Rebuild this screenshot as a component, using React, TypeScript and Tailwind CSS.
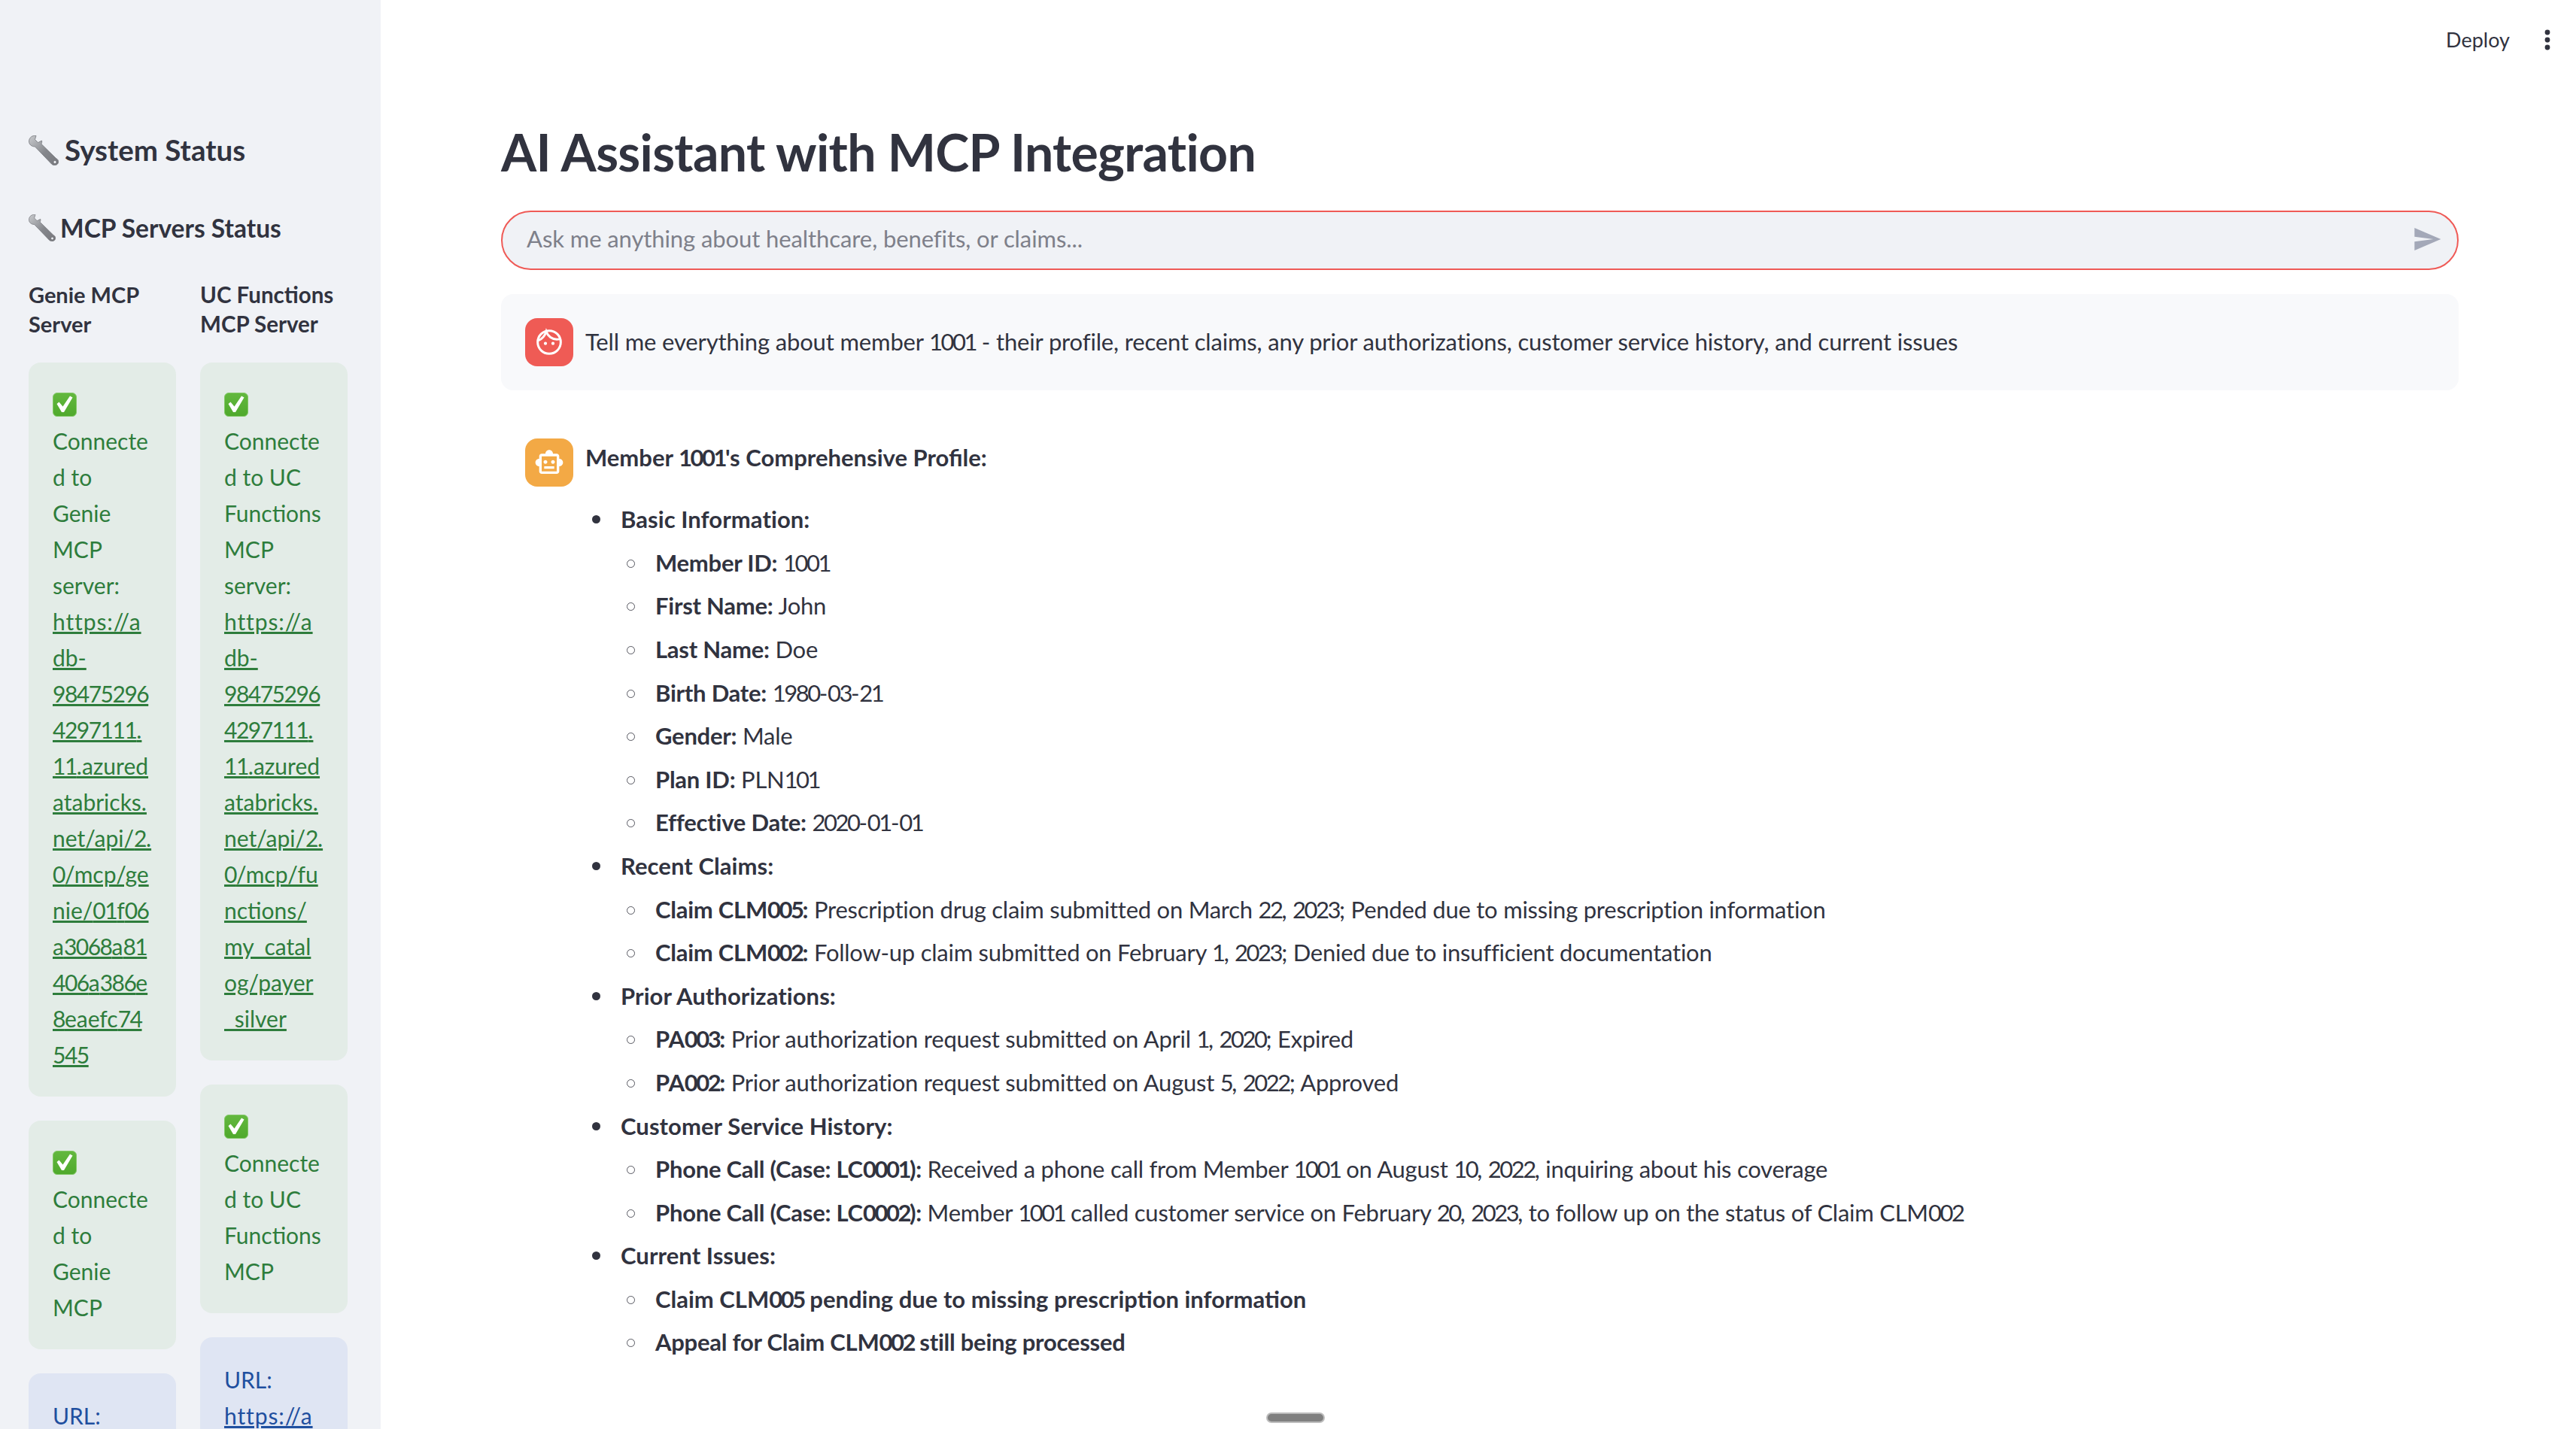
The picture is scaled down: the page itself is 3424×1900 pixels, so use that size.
const Wrench = ({ size, id }: { size: number; id: string }) => (
  <svg width={size} height={size} viewBox="0 0 40 40" className="shrink-0">
    <defs>
      <linearGradient id={id} x1="0" y1="0" x2="1" y2="1">
        <stop offset="0" stopColor="#c9cbce" />
        <stop offset="0.55" stopColor="#85878c" />
        <stop offset="1" stopColor="#77787d" />
      </linearGradient>
    </defs>
    <path
      d="M10 0.5 C5 -0.5 0.5 3 0.5 8 C0.5 12 4 15 8.5 15 L30.5 38 C33 40.5 38 40 39.2 37 C40.5 33.5 38.5 31.5 36.5 30.5 L17 11.5 C17.5 10 18 8.5 17.5 7 L12.5 9.5 L8.5 5.5 Z"
      fill={`url(#${id})`}
      stroke="#6c6e72"
      strokeWidth="0.7"
    />
    <circle cx="35" cy="35.5" r="2" fill="#f0f2f6" stroke="#5f6165" strokeWidth="0.6" />
  </svg>
);

const Check = () => (
  <svg width="32" height="32" viewBox="0 0 32 32" className="block">
    <defs>
      <linearGradient id="ck" x1="0" y1="0" x2="0" y2="1">
        <stop offset="0" stopColor="#63b83f" />
        <stop offset="1" stopColor="#4fa92c" />
      </linearGradient>
    </defs>
    <rect x="0.5" y="0.5" width="31" height="31" rx="5.5" fill="url(#ck)" stroke="#83c868" strokeWidth="1" />
    <polygon points="5.5,15 8.5,12.5 13.5,18.5 23,4.5 26.5,6.5 15,26 12,26" fill="#fff" />
  </svg>
);

const Digits = ({ text, cardText }: { text: string; cardText?: boolean }) => (
  <>
    {text.split(/(\d+)/).map((part, i) =>
      /^\d+$/.test(part) ? (
        <span key={i} className={cardText ? "tracking-[-0.05em]" : "tracking-[-0.08em]"}>
          {part}
        </span>
      ) : (
        part
      ),
    )}
  </>
);

const Lines = ({ lines }: { lines: string[] }) => (
  <>
    {lines.map((l) => (
      <span
        key={l}
        className={l.startsWith("https") ? "block whitespace-pre tracking-[0.03em]" : "block whitespace-pre"}
      >
        <Digits text={l} cardText />
      </span>
    ))}
  </>
);

const Card = ({
  tone,
  check,
  text,
  link,
}: {
  tone: "green" | "blue";
  check?: boolean;
  text?: string[];
  link?: string[];
}) => (
  <div
    className={
      tone === "green"
        ? "rounded-2xl bg-[#e3ece7] p-8 text-[30px] leading-[48px] text-[#2e7d3c]"
        : "rounded-2xl bg-[#dfe5f3] p-8 text-[30px] leading-[48px] text-[#1f4f9f]"
    }
  >
    {check && (
      <div className="flex h-[48px] items-center">
        <Check />
      </div>
    )}
    {text && <Lines lines={text} />}
    {link && (
      <a className="block underline" href="#">
        <Lines lines={link} />
      </a>
    )}
  </div>
);

const B = ({ children }: { children: string }) => (
  <strong className="font-bold">
    <Digits text={children} />
  </strong>
);

const Sub = ({ label, value, loose }: { label: string; value?: string; loose?: boolean }) => (
  <li
    className={
      loose
        ? "relative mt-[6.4px] tracking-normal before:absolute before:left-[-38px] before:top-[21px] before:h-[11px] before:w-[11px] before:rounded-full before:border-[1.5px] before:border-[#55565f] before:content-['']"
        : "relative mt-[6.4px] before:absolute before:left-[-38px] before:top-[21px] before:h-[11px] before:w-[11px] before:rounded-full before:border-[1.5px] before:border-[#55565f] before:content-['']"
    }
  >
    <B>{label}</B>
    {value ? " " : ""}
    {value && <Digits text={value} />}
  </li>
);

const Top = ({ label, children }: { label: string; children: React.ReactNode }) => (
  <li className="relative mt-[6.4px] before:absolute before:left-[-38px] before:top-[20px] before:h-[11px] before:w-[11px] before:rounded-full before:bg-[#31333f] before:content-['']">
    <span className="tracking-[0.002em]">
      <B>{label}</B>
    </span>
    <ul className="list-none pl-[46px]">{children}</ul>
  </li>
);

export default function App() {
  return (
    <div
      className="flex h-[1900px] w-[3424px] overflow-hidden bg-white text-[#31333f]"
      style={{ fontFamily: "Lato, 'Noto Sans', sans-serif" }}
    >
      <aside className="w-[506px] shrink-0 overflow-hidden bg-[#f0f2f6] pl-[38px] pt-[174px]">
        <h2 className="flex h-[52px] items-center gap-[8px] text-[38.5px] font-bold">
          <Wrench size={40} id="wr1" />
          <span>System Status</span>
        </h2>
        <h3 className="mt-[52px] flex h-[50px] items-center gap-[6px] text-[33.5px] font-bold">
          <Wrench size={36} id="wr2" />
          <span>MCP Servers Status</span>
        </h3>
        <div className="mt-[44px] flex w-[424px] gap-8">
          <div className="flex w-[196px] shrink-0 flex-col gap-8">
            <div className="h-[78px] text-[29px] font-bold leading-[39px]">
              <div>Genie MCP</div>
              <div>Server</div>
            </div>
            <Card
              tone="green"
              check
              text={["Connecte", "d to", "Genie", "MCP", "server:"]}
              link={[
                "https://a",
                "db-",
                "98475296",
                "4297111.",
                "11.azured",
                "atabricks.",
                "net/api/2.",
                "0/mcp/ge",
                "nie/01f06",
                "a3068a81",
                "406a386e",
                "8eaefc74",
                "545",
              ]}
            />
            <Card tone="green" check text={["Connecte", "d to", "Genie", "MCP"]} />
            <Card tone="blue" text={["URL:"]} link={["https://a"]} />
          </div>
          <div className="flex w-[196px] shrink-0 flex-col gap-8">
            <div className="h-[78px] text-[29.5px] font-bold leading-[39px]">
              <div>UC Functions</div>
              <div>MCP Server</div>
            </div>
            <Card
              tone="green"
              check
              text={["Connecte", "d to UC", "Functions", "MCP", "server:"]}
              link={[
                "https://a",
                "db-",
                "98475296",
                "4297111.",
                "11.azured",
                "atabricks.",
                "net/api/2.",
                "0/mcp/fu",
                "nctions/",
                "my_catal",
                "og/payer",
                "_silver",
              ]}
            />
            <Card tone="green" check text={["Connecte", "d to UC", "Functions", "MCP"]} />
            <Card tone="blue" text={["URL:"]} link={["https://a"]} />
          </div>
        </div>
      </aside>

      <main className="relative min-w-0 flex-1 overflow-hidden pl-[160px] pr-[156px] text-[31px] leading-[51.2px] tracking-[-0.008em]">
        <header className="absolute right-[32px] top-[27px] flex h-[52px] items-center gap-[44px]">
          <span className="text-[27px] tracking-normal">Deploy</span>
          <svg width="12" height="30" viewBox="0 0 12 30" className="text-[#31333f]">
            <circle cx="6" cy="5" r="3.4" fill="currentColor" />
            <circle cx="6" cy="15" r="3.4" fill="currentColor" />
            <circle cx="6" cy="25" r="3.4" fill="currentColor" />
          </svg>
        </header>

        <h1 className="pt-[156px] text-[68px] font-bold leading-[92px] tracking-[-0.01em]">
          AI Assistant with MCP Integration
        </h1>

        <div className="mt-[32px] flex h-[79px] items-center justify-between rounded-[40px] border-2 border-[#ef5a56] bg-[#f0f2f6] pb-[3px] pl-[32px] pr-[20px]">
          <span className="tracking-[-0.003em] text-[#7e808a]">
            Ask me anything about healthcare, benefits, or claims...
          </span>
          <svg width="40" height="40" viewBox="0 0 24 24" fill="#a3a8b8">
            <path d="M2.01 21L23 12 2.01 3 2 10l15 2-15 2z" />
          </svg>
        </div>

        <div className="mt-[32px] flex h-[128px] items-center gap-4 rounded-2xl bg-[#f8f9fb] px-8">
          <div className="flex h-16 w-16 shrink-0 items-center justify-center rounded-2xl bg-[#ef5b55]">
            <svg width="40" height="40" viewBox="0 0 24 24" fill="none" stroke="#fff" strokeWidth="1.8">
              <circle cx="12" cy="12" r="9.2" />
              <path d="M3.5 10.5 C6 9.5 8.5 7 9.6 3.5 C11 7.5 14.5 9.8 18 9.8 C19 9.8 20 9.6 20.8 9.4" />
              <circle cx="9" cy="13" r="1.25" fill="#fff" stroke="none" />
              <circle cx="15" cy="13" r="1.25" fill="#fff" stroke="none" />
            </svg>
          </div>
          <p className="tracking-[-0.005em]">
            <Digits text="Tell me everything about member 1001 - their profile, recent claims, any prior authorizations, customer service history, and current issues" />
          </p>
        </div>

        <div className="mt-[64px] flex gap-4 px-8">
          <div className="flex h-16 w-16 shrink-0 items-center justify-center rounded-2xl bg-[#f3a945]">
            <svg width="40" height="40" viewBox="0 0 24 24" fill="#fff">
              <path d="M20 9V7c0-1.1-.9-2-2-2h-3c0-1.66-1.34-3-3-3S9 3.34 9 5H6c-1.1 0-2 .9-2 2v2c-1.66 0-3 1.34-3 3s1.34 3 3 3v4c0 1.1.9 2 2 2h12c1.1 0 2-.9 2-2v-4c1.66 0 3-1.34 3-3s-1.34-3-3-3zm-2 10H6V7h12v12zm-9-6c-.83 0-1.5-.67-1.5-1.5S8.17 10 9 10s1.5.67 1.5 1.5S9.83 13 9 13zm7.5-1.5c0 .83-.67 1.5-1.5 1.5s-1.5-.67-1.5-1.5.67-1.5 1.5-1.5 1.5.67 1.5 1.5zM8 15h8v2H8v-2z" />
            </svg>
          </div>
          <div className="min-w-0 flex-1">
            <p className="tracking-normal">
              <B>Member 1001's Comprehensive Profile:</B>
            </p>
            <ul className="mt-[31px] list-none pl-[47px]">
              <Top label="Basic Information:">
                <Sub label="Member ID:" value="1001" />
                <Sub label="First Name:" value="John" />
                <Sub label="Last Name:" value="Doe" />
                <Sub label="Birth Date:" value="1980-03-21" />
                <Sub label="Gender:" value="Male" />
                <Sub label="Plan ID:" value="PLN101" />
                <Sub label="Effective Date:" value="2020-01-01" />
              </Top>
              <Top label="Recent Claims:">
                <Sub
                  label="Claim CLM005:"
                  value="Prescription drug claim submitted on March 22, 2023; Pended due to missing prescription information"
                />
                <Sub
                  label="Claim CLM002:"
                  value="Follow-up claim submitted on February 1, 2023; Denied due to insufficient documentation"
                />
              </Top>
              <Top label="Prior Authorizations:">
                <Sub label="PA003:" value="Prior authorization request submitted on April 1, 2020; Expired" />
                <Sub label="PA002:" value="Prior authorization request submitted on August 5, 2022; Approved" />
              </Top>
              <Top label="Customer Service History:">
                <Sub
                  label="Phone Call (Case: LC0001):"
                  value="Received a phone call from Member 1001 on August 10, 2022, inquiring about his coverage"
                />
                <Sub
                  label="Phone Call (Case: LC0002):"
                  value="Member 1001 called customer service on February 20, 2023, to follow up on the status of Claim CLM002"
                />
              </Top>
              <Top label="Current Issues:">
                <Sub label="Claim CLM005 pending due to missing prescription information" loose />
                <Sub label="Appeal for Claim CLM002 still being processed" />
              </Top>
            </ul>
          </div>
        </div>

        <div className="absolute bottom-[8px] left-[1177px] h-[14px] w-[78px] rounded-full border-2 border-[#bdbdbd] bg-[#808080]" />
      </main>
    </div>
  );
}
